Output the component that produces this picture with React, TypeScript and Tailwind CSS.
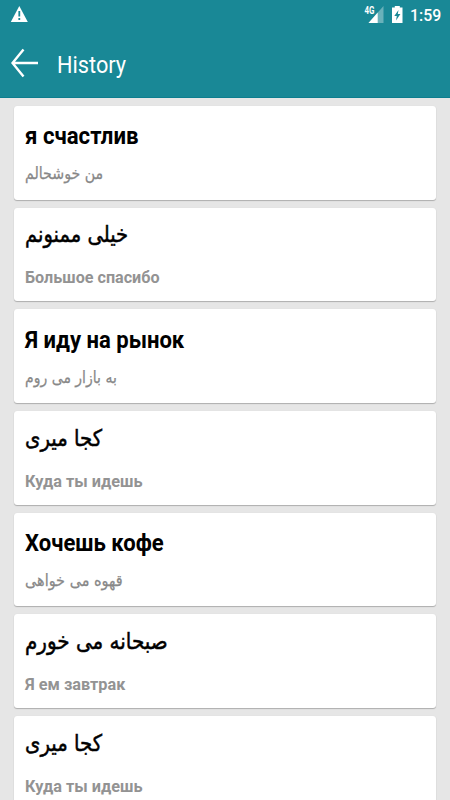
type Entry = { title: string; sub: string; titleScale: string; subScale: string; rtl: boolean };

const items: Entry[] = [
  { title: "я счастлив", sub: "من خوشحالم", titleScale: "scale-x-[0.943]", subScale: "scale-x-[0.86]", rtl: false },
  { title: "خیلی ممنونم", sub: "Большое спасибо", titleScale: "scale-x-[0.85]", subScale: "scale-x-[0.95]", rtl: true },
  { title: "Я иду на рынок", sub: "به بازار می روم", titleScale: "scale-x-[0.938]", subScale: "scale-x-[0.85]", rtl: false },
  { title: "کجا میری", sub: "Куда ты идешь", titleScale: "scale-x-[0.855]", subScale: "scale-x-[0.957]", rtl: true },
  { title: "Хочешь кофе", sub: "قهوه می خواهی", titleScale: "scale-x-[0.938]", subScale: "scale-x-[0.875]", rtl: false },
  { title: "صبحانه می خورم", sub: "Я ем завтрак", titleScale: "scale-x-[0.867]", subScale: "scale-x-[0.957]", rtl: true },
  { title: "کجا میری", sub: "Куда ты идешь", titleScale: "scale-x-[0.855]", subScale: "scale-x-[0.957]", rtl: true },
];

function Card({ item }: { item: Entry }) {
  return (
    <article
      className={`h-[93.7px] shrink-0 rounded-[3px] bg-white px-[10.5px] shadow-[0_1px_1px_rgba(0,0,0,0.24),0_0_1px_rgba(0,0,0,0.1)] ${item.rtl ? "pt-[10.8px]" : "pt-[14.2px]"}`}
    >
      <h2
        className={`w-max origin-left whitespace-nowrap text-black ${item.titleScale} ${item.rtl ? "font-['DejaVu_Sans',sans-serif] text-[23px] font-normal leading-[32px] [-webkit-text-stroke:0.5px_#000]" : "text-[23.5px] font-bold leading-[32px]"}`}
      >
        {item.title}
      </h2>
      <p
        className={`w-max origin-left whitespace-nowrap ${item.subScale} ${item.rtl ? "mt-[13.8px] text-[17px] font-bold leading-[26px] text-[#939393]" : "mt-[9.2px] font-['DejaVu_Sans',sans-serif] text-[16.5px] leading-[26px] text-[#888] [-webkit-text-stroke:0.25px_#888]"}`}
      >
        {item.sub}
      </p>
    </article>
  );
}

export default function App() {
  return (
    <div className="h-[800px] w-[450px] overflow-hidden bg-[#e6e6e6] font-['Roboto','DejaVu_Sans',sans-serif]">
      <header className="h-[98px] border-b border-[#0d7e8f] bg-[#198896] text-white">
        <div className="flex h-[30px] items-center justify-between pl-[10px] pr-[9px]">
          <svg className="h-[18px] w-[18px]" viewBox="0 0 18 18">
            <path d="M9.3 0 17.8 16H.8Z" fill="#fff" />
            <path d="M9.3 5v5.500M9.3 12v2" stroke="#198896" strokeWidth="1.8" />
          </svg>
          <div className="flex items-center">
            <svg className="h-[20px] w-[40px]" viewBox="0 0 40 20">
              <path d="M19.500 1v17H4.500Z" fill="#fff" opacity=".35" />
              <path d="M0 0h10.500v9.500H0Z" fill="#198896" />
              <path d="M13.700 7.500V18H4.500Z" fill="#fff" />
              <text x="0.500" y="8.800" fill="#fff" fontSize="10.500" fontWeight="700" textLength="10" lengthAdjust="spacingAndGlyphs">4G</text>
              <path d="M29.800 1h5v1.500h2.700v15.500h-10.500V2.500h2.800Z" fill="#fff" transform="translate(1 0)" />
              <path d="m34.500 5-4.200 6h2.500l-.8 4.500 4.400-6.500h-2.600Z" fill="#198896" />
            </svg>
            <span className="ml-[6.500px] w-[31px] origin-left scale-x-[0.93] whitespace-nowrap text-[17px] font-medium leading-5">1:59</span>
          </div>
        </div>
        <div className="flex h-[67px] items-center pl-[11px]">
          <svg className="mb-[2px] h-[30px] w-[28px]" viewBox="0 0 28 30" fill="none" stroke="#fff" strokeWidth="2.4">
            <path d="M12.500 1.500 1.500 15l11 13.500M1.500 15H27" />
          </svg>
          <h1 className="ml-[18px] mt-[2px] origin-left scale-x-[0.925] text-[23.5px] font-normal leading-[30px]">History</h1>
        </div>
      </header>
      <main className="flex flex-col gap-[8px] px-[14px] pt-[8px]">
        {items.map((item, i) => (
          <Card key={i} item={item} />
        ))}
      </main>
    </div>
  );
}
